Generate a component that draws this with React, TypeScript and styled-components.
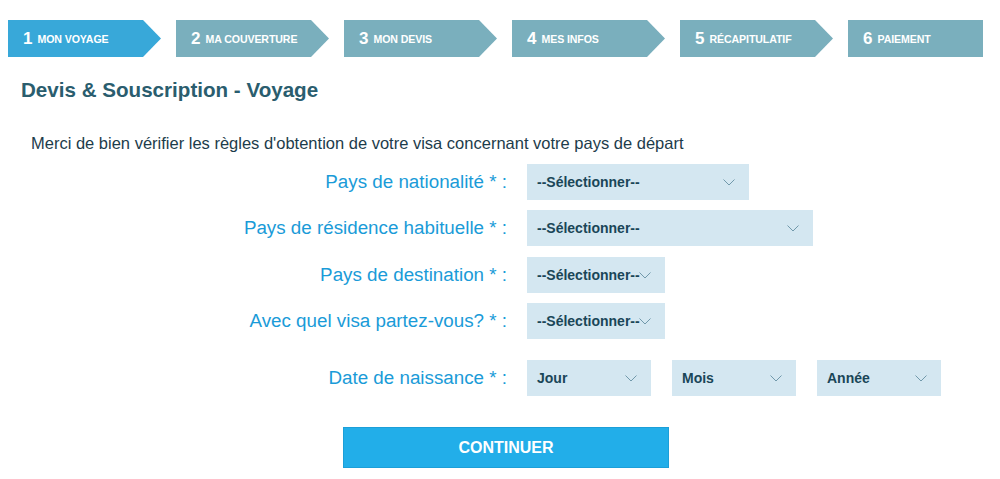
import React from "react";
import styled, { createGlobalStyle } from "styled-components";

const GlobalStyle = createGlobalStyle`
    html, body {
        margin: 0;
        padding: 0;
        background: #ffffff;
        font-family: "Liberation Sans", Arial, sans-serif;
    }
`;

const Page = styled.div`
    width: 1000px;
    height: 479px;
    overflow: hidden;
    box-sizing: border-box;
    padding-top: 20px;
`;

const Steps = styled.div`
    display: flex;
    flex-direction: row;
    gap: 15px;
    padding-left: 8px;
`;

const tip = 18;

const Step = styled.div<{ $active?: boolean; $last?: boolean }>`
    box-sizing: border-box;
    width: ${(p) => (p.$last ? 135 : 153)}px;
    height: 37px;
    display: flex;
    align-items: center;
    padding-left: 15px;
    gap: 5px;
    color: #ffffff;
    background-color: ${(p) => (p.$active ? "#38a8d9" : "#7aafbd")};
    clip-path: ${(p) =>
        p.$last
            ? "none"
            : `polygon(0 0, calc(100% - ${tip}px) 0, 100% 50%, calc(100% - ${tip}px) 100%, 0 100%)`};
`;

const StepNumber = styled.span`
    font-size: 17px;
    font-weight: bold;
`;

const StepLabel = styled.span`
    font-size: 10.6px;
    font-weight: bold;
    text-transform: uppercase;
    letter-spacing: -0.1px;
    padding-top: 1px;
`;

const Title = styled.h1`
    margin: 21px 0 0 21px;
    font-size: 20.6px;
    line-height: 24px;
    font-weight: bold;
    color: #2a5d6e;
`;

const Notice = styled.p`
    margin: 32px 0 0 31px;
    font-size: 16.5px;
    line-height: 18px;
    color: #1d3c4b;
`;

const Form = styled.div`
    display: flex;
    flex-direction: column;
    gap: 10.5px;
    margin-top: 11.5px;
`;

const FormRow = styled.div<{ $spaced?: boolean }>`
    display: grid;
    grid-template-columns: 507px auto;
    column-gap: 20px;
    align-items: center;
    height: 36px;
    margin-top: ${(p) => (p.$spaced ? 10.5 : 0)}px;
`;

const Label = styled.label`
    justify-self: end;
    font-size: 18.8px;
    color: #1a9bd8;
    white-space: nowrap;
`;

const Field = styled.div`
    display: flex;
    gap: 21px;
    align-items: center;
`;

const SelectBox = styled.div<{ $width: number }>`
    position: relative;
    box-sizing: border-box;
    width: ${(p) => p.$width}px;
    height: 36px;
    display: flex;
    align-items: center;
    padding-left: 10px;
    background-color: #d4e7f1;
    color: #1a4658;
    font-size: 14px;
    font-weight: bold;
    white-space: nowrap;
`;

const Chevron = styled.svg`
    position: absolute;
    right: 14px;
    top: 15px;
`;

const Button = styled.button`
    display: block;
    box-sizing: border-box;
    margin: 31px 0 0 343px;
    width: 326px;
    height: 41px;
    background-color: #22aee9;
    border: 1px solid #1c9fd8;
    color: #ffffff;
    font-family: "Liberation Sans", Arial, sans-serif;
    font-size: 16px;
    font-weight: bold;
    cursor: pointer;
`;

const steps = [
    "Mon voyage",
    "Ma couverture",
    "Mon devis",
    "Mes infos",
    "Récapitulatif",
    "Paiement",
];

function Select({ text, width }: { text: string; width: number }) {
    return (
        <SelectBox $width={width}>
            {text}
            <Chevron width="12" height="7" viewBox="0 0 12 7">
                <polyline points="0.5,0.5 6,6 11.5,0.5" fill="none" stroke="#7199ab" strokeWidth="1" />
            </Chevron>
        </SelectBox>
    );
}

export default function App() {
    return (
        <Page>
            <GlobalStyle />
            <Steps>
                {steps.map((label, i) => (
                    <Step key={label} $active={i === 0} $last={i === steps.length - 1}>
                        <StepNumber>{i + 1}</StepNumber>
                        <StepLabel>{label}</StepLabel>
                    </Step>
                ))}
            </Steps>
            <Title>Devis &amp; Souscription - Voyage</Title>
            <Notice>Merci de bien vérifier les règles d'obtention de votre visa concernant votre pays de départ</Notice>
            <Form>
                <FormRow>
                    <Label>Pays de nationalité * :</Label>
                    <Field>
                        <Select text="--Sélectionner--" width={222} />
                    </Field>
                </FormRow>
                <FormRow>
                    <Label>Pays de résidence habituelle * :</Label>
                    <Field>
                        <Select text="--Sélectionner--" width={286} />
                    </Field>
                </FormRow>
                <FormRow>
                    <Label>Pays de destination * :</Label>
                    <Field>
                        <Select text="--Sélectionner--" width={138} />
                    </Field>
                </FormRow>
                <FormRow>
                    <Label>Avec quel visa partez-vous? * :</Label>
                    <Field>
                        <Select text="--Sélectionner--" width={138} />
                    </Field>
                </FormRow>
                <FormRow $spaced>
                    <Label>Date de naissance * :</Label>
                    <Field>
                        <Select text="Jour" width={124} />
                        <Select text="Mois" width={124} />
                        <Select text="Année" width={124} />
                    </Field>
                </FormRow>
            </Form>
            <Button>CONTINUER</Button>
        </Page>
    );
}
